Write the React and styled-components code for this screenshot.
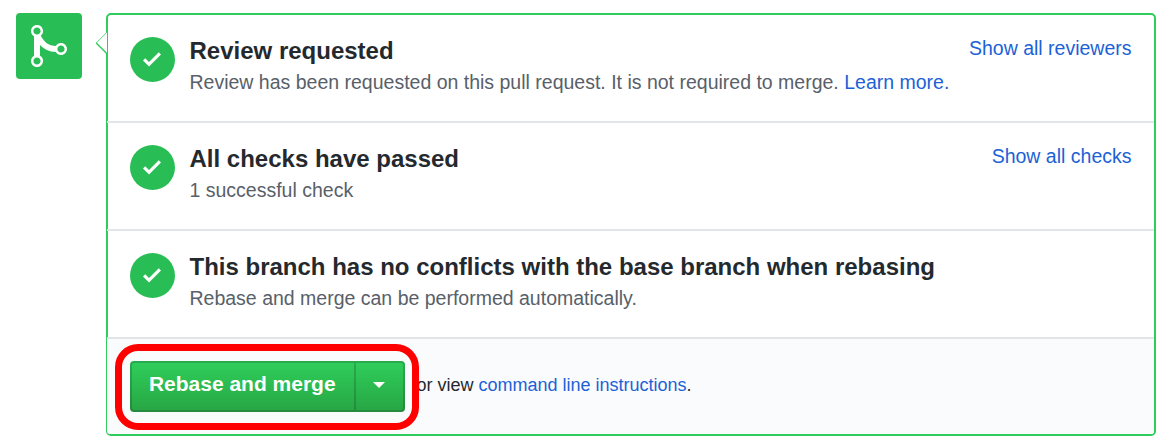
import React from "react";
import styled, { createGlobalStyle } from "styled-components";

const Global = createGlobalStyle`
  body { margin: 0; background: #fff; }
  * { box-sizing: border-box; }
`;
const Page = styled.main`
  display: flex;
  align-items: flex-start;
  gap: 24px;
  width: 1164px;
  height: 447px;
  padding: 13px 8px 0 16px;
  overflow: hidden;
  font-family: "Liberation Sans", Arial, sans-serif;
  color: #24292e;
`;
const MergeBadge = styled.div`
  flex: none;
  width: 66px;
  height: 66px;
  padding: 9px 0 0 15px;
  border-radius: 4px;
  background: #28be55;
  svg { display: block; }
`;
const Panel = styled.section`
  position: relative;
  flex: 1;
  height: 423px;
  border: 2px solid #2fcb5b;
  border-radius: 5px;
`;
const Pointer = styled.svg`
  position: absolute;
  left: -13px;
  top: 16px;
`;
const Row = styled.div`
  display: flex;
  align-items: flex-start;
  height: 108px;
  margin-left: -1px;
  padding: 22px 22.5px 0 23px;
  background: linear-gradient(#e1e4e8, #e1e4e8) bottom / 100% 2px no-repeat;
`;
const Status = styled.div`
  flex: none;
  display: flex;
  width: 45px;
  height: 45px;
  margin-right: 14.5px;
  padding: 9.75px 0 0 12.9px;
  border-radius: 50%;
  background: #28be55;
`;
const Copy = styled.div`
  flex: 1;
  white-space: nowrap;
`;
const Title = styled.h4`
  margin: -4px 0 0;
  font-size: 24px;
  line-height: 36px;
`;
const Detail = styled.p`
  margin: 0;
  font-size: 19.5px;
  line-height: 27px;
  color: #586069;
`;
const Link = styled.a`
  color: #1b62d6;
`;
const Toggle = styled(Link)`
  font-size: 19.5px;
  line-height: 24px;
  margin-top: -1px;
`;
const Footer = styled.div`
  display: flex;
  align-items: flex-start;
  height: 95px;
  margin-left: -1px;
  padding: 22px 0 0 23px;
  border-radius: 0 0 3px 3px;
  background: #fafbfc;
`;
const ButtonGroup = styled.div`
  position: relative;
  display: flex;
  width: 275px;
  height: 51px;
`;
const Button = styled.button`
  display: flex;
  align-items: center;
  justify-content: center;
  width: ${(p) => p.$width}px;
  padding: 0 1.5px 5px 0;
  border: 2px solid rgba(27, 31, 35, 0.2);
  border-left-width: ${(p) => (p.$end ? 0 : 2)}px;
  border-radius: ${(p) => (p.$end ? "0 4px 4px 0" : "4px 0 0 4px")};
  background: linear-gradient(#2fcf5b, #28a745 95%) border-box;
  color: #fff;
  font: bold 21px "Liberation Sans", Arial, sans-serif;
  white-space: nowrap;
  svg { position: relative; top: 1px; }
`;
const Highlight = styled.span`
  position: absolute;
  left: -15px;
  top: -17px;
  width: 304px;
  height: 86px;
  border: 7px solid #f00;
  border-radius: 23px;
  z-index: 1;
`;
const Hint = styled.span`
  margin: 12px 0 0 11.5px;
  font-size: 18px;
  line-height: 24px;
  white-space: nowrap;
`;

const rows = [
  {
    title: "Review requested",
    detail: "Review has been requested on this pull request. It is not required to merge. ",
    more: "Learn more.",
    toggle: "Show all reviewers",
  },
  { title: "All checks have passed", detail: "1 successful check", toggle: "Show all checks" },
  {
    title: "This branch has no conflicts with the base branch when rebasing",
    detail: "Rebase and merge can be performed automatically.",
  },
];

const Check = () => (
  <svg width="18" height="24" viewBox="0 0 12 16" fill="#fff">
    <path d="M12 5l-8 8-4-4 1.5-1.5L4 10l6.5-6.5L12 5z" />
  </svg>
);
const Merge = () => (
  <svg width="36" height="48" viewBox="0 0 12 16" fill="#fff">
    <path
      fillRule="evenodd"
      d="M10 7c-.73 0-1.38.41-1.73 1.02V8C7.22 7.98 6 7.64 5.14 6.98c-.75-.58-1.5-1.61-1.89-2.44A1.993 1.993 0 0 0 2 .99C.89.99 0 1.89 0 3a2 2 0 0 0 1 1.72v6.56c-.59.35-1 .99-1 1.72 0 1.11.89 2 2 2a1.993 1.993 0 0 0 1-3.72V7.67c.67.7 1.44 1.27 2.3 1.69.86.42 2.03.63 2.97.64v-.02c.36.61 1 1.02 1.73 1.02 1.11 0 2-.89 2-2 0-1.11-.89-2-2-2zm-6.8 6c0 .66-.55 1.2-1.2 1.2-.65 0-1.2-.55-1.2-1.2 0-.65.55-1.2 1.2-1.2.65 0 1.2.55 1.2 1.2zm0-10c0 .66-.55 1.2-1.2 1.2C1.35 4.2.8 3.65.8 3c0-.65.55-1.2 1.2-1.2.65 0 1.2.55 1.2 1.2zm8 6c0 .66-.55 1.2-1.2 1.2-.65 0-1.2-.55-1.2-1.2 0-.65.55-1.2 1.2-1.2.65 0 1.2.55 1.2 1.2z"
    />
  </svg>
);

export default function App() {
  return (
    <Page>
      <Global />
      <MergeBadge>
        <Merge />
      </MergeBadge>
      <Panel>
        <Pointer width="12" height="24" viewBox="0 0 12 24">
          <path d="M12 1L1 12l11 11z" fill="#fff" />
          <path d="M12 1.2L1.2 12" fill="none" stroke="#2fcb5b" strokeWidth="0.8" />
          <path d="M1.2 12L12 22.8" fill="none" stroke="#2fcb5b" strokeWidth="1.4" />
        </Pointer>
        {rows.map((r) => (
          <Row key={r.title}>
            <Status>
              <Check />
            </Status>
            <Copy>
              <Title>{r.title}</Title>
              <Detail>
                {r.detail}
                {r.more && <Link>{r.more}</Link>}
              </Detail>
            </Copy>
            {r.toggle && <Toggle>{r.toggle}</Toggle>}
          </Row>
        ))}
        <Footer>
          <ButtonGroup>
            <Button $width={226}>Rebase and merge</Button>
            <Button $width={49} $end aria-label="Select merge method">
              <svg width="12" height="6" viewBox="0 0 12 6" fill="#fff">
                <path d="M0 0h12L6 6z" />
              </svg>
            </Button>
            <Highlight />
          </ButtonGroup>
          <Hint>
            or view <Link>command line instructions</Link>.
          </Hint>
        </Footer>
      </Panel>
    </Page>
  );
}
